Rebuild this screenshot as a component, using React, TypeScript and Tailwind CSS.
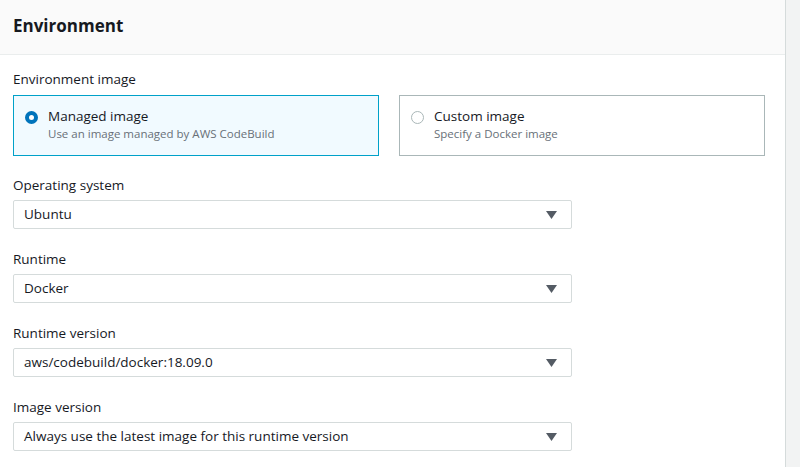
const font = { fontFamily: '"Open Sans", "Liberation Sans", sans-serif' };

function Caret() {
  return (
    <svg width="11" height="8" viewBox="0 0 11 8" className="shrink-0">
      <path d="M0 0 H11 L5.5 8 Z" fill="#545b64" />
    </svg>
  );
}

function Select({ label, value }: { label: string; value: string }) {
  return (
    <div className="flex flex-col">
      <span className="text-[13.5px] leading-[20px] text-[#16191f]">{label}</span>
      <div className="mt-[5px] flex h-[29px] w-[559px] items-center justify-between rounded-[2px] border border-[#d5dbdb] pl-[10px] pr-[14px] text-[13.5px] text-[#16191f]">
        <span>{value}</span>
        <Caret />
      </div>
    </div>
  );
}

function Tile({
  title,
  desc,
  selected,
}: {
  title: string;
  desc: string;
  selected?: boolean;
}) {
  return (
    <div
      className={`flex h-[61px] w-[366px] items-start gap-[10px] border px-[11px] pt-[11px] ${
        selected ? "border-[#00a1c9] bg-[#f1faff]" : "border-[#aab7b8] bg-white"
      }`}
    >
      {selected ? (
        <span className="mt-[4px] h-[13px] w-[13px] shrink-0 rounded-full border-[4px] border-[#0073bb] bg-white" />
      ) : (
        <span className="mt-[4px] h-[13px] w-[13px] shrink-0 rounded-full border border-[#aab7b8] bg-white" />
      )}
      <div className="flex flex-col">
        <span className="text-[13.5px] leading-[19px] text-[#16191f]">{title}</span>
        <span className="text-[11.5px] leading-[16px] text-[#687078]">{desc}</span>
      </div>
    </div>
  );
}

export default function App() {
  return (
    <div className="flex h-[467px] w-[800px] overflow-hidden bg-white" style={font}>
      <div className="flex w-[785px] flex-col">
        <div className="flex h-[55px] shrink-0 items-center border-b border-[#eaeded] bg-[#fafafa] px-[13px]">
          <h2 className="-mt-[3px] text-[17px] font-bold text-[#16191f]">Environment</h2>
        </div>
        <div className="flex flex-col px-[13px] pt-[14px]">
          <span className="text-[13.5px] leading-[20px] text-[#16191f]">Environment image</span>
          <div className="mt-[6px] flex shrink-0 gap-[20px]">
            <Tile title="Managed image" desc="Use an image managed by AWS CodeBuild" selected />
            <Tile title="Custom image" desc="Specify a Docker image" />
          </div>
          <div className="mt-[19px] flex flex-col gap-[20px]">
            <Select label="Operating system" value="Ubuntu" />
            <Select label="Runtime" value="Docker" />
            <Select label="Runtime version" value="aws/codebuild/docker:18.09.0" />
            <Select label="Image version" value="Always use the latest image for this runtime version" />
          </div>
        </div>
      </div>
      <div className="flex-1 border-l border-[#d5dbdb] bg-[#f2f3f3]" />
    </div>
  );
}
